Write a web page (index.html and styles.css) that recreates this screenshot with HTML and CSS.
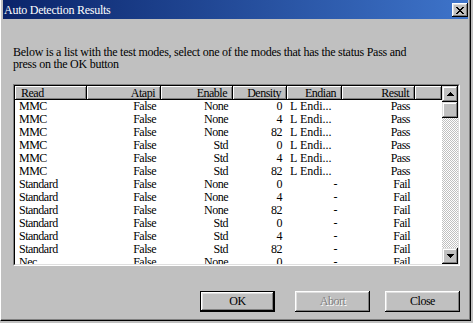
FILE: index.html
```html
<!DOCTYPE html>
<html>
<head>
<meta charset="utf-8">
<link rel="stylesheet" href="styles.css">
</head>
<body>
<div class="window">
  <div class="titlebar">
    <span class="title">Auto Detection Results</span>
    <span class="close"><svg width="8" height="7" viewBox="0 0 8 7" shape-rendering="crispEdges"><path fill="#000" d="M0 0h2v1H0z M6 0h2v1H6z M1 1h2v1H1z M5 1h2v1H5z M2 2h4v1H2z M3 3h2v1H3z M2 4h4v1H2z M1 5h2v1H1z M5 5h2v1H5z M0 6h2v1H0z M6 6h2v1H6z"/></svg></span>
  </div>
  <div class="client">
    <p class="desc">Below is a list with the test modes, select one of the modes that has the status Pass and<br>press on the OK button</p>
    <div class="list">
      <div class="list-inner">
        <div class="table">
          <div class="header">
            <div class="hcell l">Read</div>
            <div class="hcell">Atapi</div>
            <div class="hcell">Enable</div>
            <div class="hcell">Density</div>
            <div class="hcell">Endian</div>
            <div class="hcell">Result</div>
            <div class="hcell"></div>
          </div>
          <div class="rows">
            <div class="c l">MMC</div><div class="c">False</div><div class="c">None</div><div class="c">0</div><div class="c e">L Endi...</div><div class="c">Pass</div>
            <div class="c l">MMC</div><div class="c">False</div><div class="c">None</div><div class="c">4</div><div class="c e">L Endi...</div><div class="c">Pass</div>
            <div class="c l">MMC</div><div class="c">False</div><div class="c">None</div><div class="c">82</div><div class="c e">L Endi...</div><div class="c">Pass</div>
            <div class="c l">MMC</div><div class="c">False</div><div class="c">Std</div><div class="c">0</div><div class="c e">L Endi...</div><div class="c">Pass</div>
            <div class="c l">MMC</div><div class="c">False</div><div class="c">Std</div><div class="c">4</div><div class="c e">L Endi...</div><div class="c">Pass</div>
            <div class="c l">MMC</div><div class="c">False</div><div class="c">Std</div><div class="c">82</div><div class="c e">L Endi...</div><div class="c">Pass</div>
            <div class="c l">Standard</div><div class="c">False</div><div class="c">None</div><div class="c">0</div><div class="c">-</div><div class="c">Fail</div>
            <div class="c l">Standard</div><div class="c">False</div><div class="c">None</div><div class="c">4</div><div class="c">-</div><div class="c">Fail</div>
            <div class="c l">Standard</div><div class="c">False</div><div class="c">None</div><div class="c">82</div><div class="c">-</div><div class="c">Fail</div>
            <div class="c l">Standard</div><div class="c">False</div><div class="c">Std</div><div class="c">0</div><div class="c">-</div><div class="c">Fail</div>
            <div class="c l">Standard</div><div class="c">False</div><div class="c">Std</div><div class="c">4</div><div class="c">-</div><div class="c">Fail</div>
            <div class="c l">Standard</div><div class="c">False</div><div class="c">Std</div><div class="c">82</div><div class="c">-</div><div class="c">Fail</div>
            <div class="c l">Nec</div><div class="c">False</div><div class="c">None</div><div class="c">0</div><div class="c">-</div><div class="c">Fail</div>
          </div>
        </div>
        <div class="scrollbar">
          <div class="sbtn"><svg width="7" height="4" viewBox="0 0 7 4" shape-rendering="crispEdges"><path fill="#000" d="M3 0h1v1H3z M2 1h3v1H2z M1 2h5v1H1z M0 3h7v1H0z"/></svg></div>
          <div class="thumb"></div>
          <div class="track"></div>
          <div class="sbtn"><svg width="7" height="4" viewBox="0 0 7 4" shape-rendering="crispEdges"><path fill="#000" d="M0 0h7v1H0z M1 1h5v1H1z M2 2h3v1H2z M3 3h1v1H3z"/></svg></div>
        </div>
      </div>
    </div>
    <div class="buttons">
      <button class="btn default">OK</button>
      <button class="btn disabled">Abort</button>
      <button class="btn close-btn">Close</button>
    </div>
  </div>
</div>
</body>
</html>
```
FILE: styles.css
```css
html, body {
  margin: 0;
  padding: 0;
}
body {
  width: 473px;
  height: 323px;
  overflow: hidden;
  background: #c0c0c0;
  font-family: "Liberation Serif", "Times New Roman", serif;
  font-size: 12px;
  color: #000;
}
.window {
  width: 471px;
  height: 321px;
  box-sizing: border-box;
  background: #c0c0c0;
  border-left: 1px solid #fff;
  border-right: 1px solid #000;
  border-bottom: 1px solid #000;
  box-shadow: inset -1px -1px 0 #808080;
  padding: 0 2px;
  display: flex;
  flex-direction: column;
}
.titlebar {
  height: 19px;
  margin-bottom: 1px;
  background: linear-gradient(to right, #0a246a, #3e74ca);
  display: flex;
  align-items: flex-start;
  justify-content: space-between;
  color: #fff;
  padding-left: 1px;
}
.title {
  margin-top: 4px;
  line-height: 13px;
  letter-spacing: -0.25px;
  white-space: nowrap;
}
.close {
  width: 16px;
  height: 14px;
  margin-top: 3px;
  box-sizing: border-box;
  background: #c0c0c0;
  box-shadow: inset -1px -1px 0 #000, inset 1px 1px 0 #fff, inset -2px -2px 0 #808080, inset 2px 2px 0 #dfdfdf;
  display: flex;
  align-items: center;
  justify-content: center;
}
.close svg {
  display: block;
  margin-left: -1px;
}
.client {
  flex: 1;
  display: flex;
  flex-direction: column;
  padding: 0 7px 0 10px;
  letter-spacing: -0.5px;
}
.desc {
  margin: 26px 0 0 0;
  line-height: 12px;
  letter-spacing: -0.25px;
  white-space: nowrap;
}
.list {
  margin-top: 14px;
  width: 447px;
  height: 182px;
  box-sizing: border-box;
  border: 1px solid;
  border-color: #808080 #fff #fff #808080;
}
.list-inner {
  height: 100%;
  box-sizing: border-box;
  border: 1px solid;
  border-color: #000 #dfdfdf #dfdfdf #000;
  display: flex;
  background: #fff;
}
.table {
  flex: 1;
  overflow: hidden;
  background: #fff;
}
.header {
  display: grid;
  grid-template-columns: 72px 74px 72px 54px 55px 73px 1fr;
  height: 14px;
}
.hcell {
  background: #c0c0c0;
  box-shadow: inset -1px -1px 0 #000, inset 1px 1px 0 #fff, inset -2px -2px 0 #808080;
  line-height: 14px;
  text-align: right;
  padding: 0 6px;
  white-space: nowrap;
  overflow: hidden;
}
.hcell.l {
  text-align: left;
}
.rows {
  display: grid;
  grid-template-columns: 72px 74px 72px 54px 55px 73px;
  grid-auto-rows: 13px;
}
.c {
  line-height: 13px;
  text-align: right;
  padding: 0 5px 0 4px;
  white-space: nowrap;
  overflow: hidden;
}
.c.l {
  text-align: left;
}
.c.e {
  text-align: left;
  padding-left: 3px;
  letter-spacing: 0;
}
.scrollbar {
  width: 16px;
  display: flex;
  flex-direction: column;
}
.sbtn, .thumb {
  width: 16px;
  height: 16px;
  box-sizing: border-box;
  background: #c0c0c0;
  box-shadow: inset -1px -1px 0 #000, inset 1px 1px 0 #dfdfdf, inset -2px -2px 0 #808080, inset 2px 2px 0 #fff;
  display: flex;
  align-items: center;
  justify-content: center;
}
.sbtn svg {
  display: block;
}
.track {
  flex: 1;
  background-image: conic-gradient(#fff 25%, #c0c0c0 0 50%, #fff 0 75%, #c0c0c0 0);
  background-size: 2px 2px;
}
.buttons {
  margin-top: 25px;
  display: flex;
}
.btn {
  width: 75px;
  height: 21px;
  box-sizing: border-box;
  padding: 0;
  border: none;
  background: #c0c0c0;
  font-family: "Liberation Serif", "Times New Roman", serif;
  font-size: 12px;
  letter-spacing: -0.5px;
  line-height: 21px;
  color: #000;
  box-shadow: inset -1px -1px 0 #000, inset 1px 1px 0 #fff, inset -2px -2px 0 #808080, inset 2px 2px 0 #dfdfdf;
}
.btn.default {
  margin-left: 187px;
  border: 1px solid #000;
  line-height: 19px;
}
.btn.disabled {
  margin-left: 20px;
  color: #808080;
  text-shadow: 1px 1px 0 #fff;
}
.btn.close-btn {
  margin-left: 15px;
}
```
